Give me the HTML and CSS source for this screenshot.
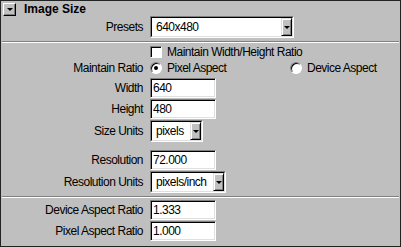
FILE: index.html
```html
<!DOCTYPE html>
<html lang="en">
<head>
  <meta charset="UTF-8">
  <title>Image Size</title>
  <link rel="stylesheet" href="styles.css">
</head>
<body>
  <div class="panel">
    <div class="header">
      <span class="collapse"><span class="tri"></span></span>
      <span class="title">Image Size</span>
    </div>

    <div class="field h22">
      <span class="label">Presets</span>
      <div class="select w144">
        <div class="select-inner">
          <span class="select-text">640x480</span>
          <span class="arrow"><span class="tri"></span></span>
        </div>
      </div>
    </div>

    <div class="sep"></div>

    <div class="section">
      <div class="field h15">
        <span class="label"></span>
        <span class="check"></span>
        <span class="opt-text">Maintain Width/Height Ratio</span>
      </div>
      <div class="field h17">
        <span class="label">Maintain Ratio</span>
        <span class="option">
          <span class="radio on"></span>
          <span class="opt-text">Pixel Aspect</span>
        </span>
        <span class="option">
          <span class="radio"></span>
          <span class="opt-text">Device Aspect</span>
        </span>
      </div>
      <div class="field h20 mt2">
        <span class="label">Width</span>
        <input class="input" type="text" value="640">
      </div>
      <div class="field h20 mt1">
        <span class="label">Height</span>
        <input class="input" type="text" value="480">
      </div>
      <div class="field h22 mt1">
        <span class="label">Size Units</span>
        <div class="select w53">
          <div class="select-inner">
            <span class="select-text">pixels</span>
            <span class="arrow"><span class="tri"></span></span>
          </div>
        </div>
      </div>
      <div class="field h20 mt8">
        <span class="label">Resolution</span>
        <input class="input" type="text" value="72.000">
      </div>
      <div class="field h22 mt1">
        <span class="label">Resolution Units</span>
        <div class="select w76">
          <div class="select-inner">
            <span class="select-text">pixels/inch</span>
            <span class="arrow"><span class="tri"></span></span>
          </div>
        </div>
      </div>
    </div>

    <div class="sep"></div>

    <div class="section section-low">
      <div class="field h20">
        <span class="label">Device Aspect Ratio</span>
        <input class="input" type="text" value="1.333">
      </div>
      <div class="field h20 mt1">
        <span class="label">Pixel Aspect Ratio</span>
        <input class="input" type="text" value="1.000">
      </div>
    </div>
  </div>
</body>
</html>
```

FILE: styles.css
```css
body {
  margin: 0;
  background-color: #fff;
  font-family: "Liberation Sans", Arial, sans-serif;
  font-size: 12px;
  letter-spacing: -0.5px;
  color: #000;
}
.panel {
  box-sizing: border-box;
  width: 401px;
  height: 247px;
  border: 1px solid #222;
  background-color: #bfbfbf;
  overflow: hidden;
}
.header {
  display: flex;
  align-items: flex-start;
  height: 15px;
}
.collapse {
  box-sizing: border-box;
  display: flex;
  align-items: center;
  justify-content: center;
  width: 13px;
  height: 13px;
  margin: 2px 0 0 2px;
  background-color: #c0c0c0;
  border: 1px solid;
  border-color: #fff #000 #000 #fff;
  box-shadow: inset -1px -1px #808080;
}
.title {
  margin-left: 8px;
  padding-top: 1px;
  font-size: 12px;
  font-weight: bold;
  letter-spacing: 0;
  line-height: 15px;
}
.tri {
  width: 0;
  height: 0;
  border-left: 3px solid transparent;
  border-right: 3px solid transparent;
  border-top: 3px solid #000;
}
.field {
  display: flex;
  align-items: center;
}
.h15 { height: 15px; }
.h17 { height: 17px; }
.h20 { height: 20px; }
.h22 { height: 22px; }
.mt1 { margin-top: 1px; }
.mt2 { margin-top: 2px; }
.mt8 { margin-top: 8px; }
.label {
  flex: none;
  width: 142px;
  margin-right: 7px;
  text-align: right;
  white-space: nowrap;
}
.sep {
  margin: 3px 1px 0;
  border-top: 1px solid #808080;
  border-bottom: 1px solid #fff;
}
.section {
  padding-top: 1px;
}
.section-low {
  padding-top: 2px;
}
.select {
  box-sizing: border-box;
  display: flex;
  flex: none;
  height: 22px;
  border: 1px solid;
  border-color: #808080 #fff #fff #808080;
}
.w144 { width: 144px; }
.w53 { width: 53px; }
.w76 { width: 76px; }
.select-inner {
  display: flex;
  flex: 1;
  border: 1px solid;
  border-color: #000 #dfdfdf #dfdfdf #000;
  background-color: #fff;
  overflow: hidden;
}
.select-text {
  flex: 1;
  padding-left: 4px;
  line-height: 18px;
  white-space: nowrap;
  overflow: hidden;
}
.arrow {
  box-sizing: border-box;
  display: flex;
  flex: none;
  align-items: center;
  justify-content: center;
  width: 11px;
  background-color: #c0c0c0;
  border: 1px solid;
  border-color: #dfdfdf #000 #000 #dfdfdf;
  box-shadow: inset 1px 1px #fff, inset -1px -1px #808080;
}
.input {
  box-sizing: border-box;
  flex: none;
  width: 66px;
  height: 20px;
  margin: 0;
  padding: 0 0 0 2px;
  border: 1px solid;
  border-color: #808080 #fff #fff #808080;
  box-shadow: inset 1px 1px #000, inset -1px -1px #dfdfdf;
  background-color: #fff;
  font-family: "Liberation Sans", Arial, sans-serif;
  font-size: 12px;
  letter-spacing: -0.5px;
  color: #000;
  outline: none;
}
.check,
.radio {
  box-sizing: border-box;
  flex: none;
  width: 12px;
  height: 12px;
  background-color: #fff;
  border: 1px solid;
  border-color: #808080 #fff #fff #808080;
  box-shadow: inset 1px 1px #000;
}
.radio {
  display: flex;
  align-items: center;
  justify-content: center;
  border-radius: 50%;
}
.radio.on::after {
  content: "";
  width: 4px;
  height: 4px;
  border-radius: 50%;
  background-color: #000;
}
.opt-text {
  margin-left: 5px;
  white-space: nowrap;
}
.option {
  display: flex;
  flex: none;
  align-items: center;
  width: 140px;
}
.option + .option {
  width: auto;
}
```
